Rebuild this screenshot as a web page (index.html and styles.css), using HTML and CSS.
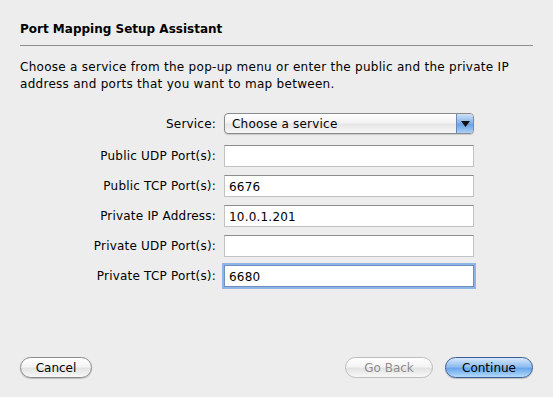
FILE: index.html
```html
<!DOCTYPE html>
<html lang="en">
  <head>
    <meta charset="UTF-8" />
    <meta name="viewport" content="width=device-width, initial-scale=1.0" />
    <title>Port Mapping Setup Assistant</title>
    <link rel="stylesheet" href="styles.css">
  </head>
  <body>
    <div class="assistant">
      <div class="assistant-title">Port Mapping Setup Assistant</div>

      <p class="assistant-intro">
        Choose a service from the pop-up menu or enter the public and the private IP
        address and ports that you want to map between.
      </p>

      <div class="mapping-form">
        <label class="field-label service-label">Service:</label>
        <div class="popup">
          <span class="popup-text">Choose a service</span>
          <span class="popup-arrow">
            <svg width="9" height="6" viewBox="0 0 9 6"><path d="M0 0 H9 L4.5 6 Z" fill="#111"/></svg>
          </span>
        </div>

        <label class="field-label">Public UDP Port(s):</label>
        <input class="text-field" type="text" value="">

        <label class="field-label">Public TCP Port(s):</label>
        <input class="text-field" type="text" value="6676">

        <label class="field-label">Private IP Address:</label>
        <input class="text-field" type="text" value="10.0.1.201">

        <label class="field-label">Private UDP Port(s):</label>
        <input class="text-field" type="text" value="">

        <label class="field-label">Private TCP Port(s):</label>
        <input class="text-field focused" type="text" value="6680">
      </div>

      <div class="button-bar">
        <button class="push-btn">Cancel</button>
        <div class="nav-buttons">
          <button class="push-btn disabled">Go Back</button>
          <button class="push-btn default">Continue</button>
        </div>
      </div>
    </div>
  </body>
</html>
```

FILE: styles.css
```css
html,
body {
  margin: 0;
  height: 100%;
}

body {
  background: #ededed;
  font-family: "DejaVu Sans", "Liberation Sans", sans-serif;
  font-size: 12px;
  color: #000;
}

.assistant {
  display: flex;
  flex-direction: column;
  height: 100%;
  box-sizing: border-box;
  padding: 21px 20px 19px 20px;
}

.assistant-title {
  font-weight: bold;
  line-height: 16px;
  padding-bottom: 8px;
  border-bottom: 1px solid #8e8e8e;
}

.assistant-intro {
  margin: 13px 0 0 0;
  line-height: 17px;
  letter-spacing: 0.28px;
}

.mapping-form {
  display: grid;
  grid-template-columns: 196px 250px;
  column-gap: 8px;
  row-gap: 8px;
  align-items: center;
  margin-top: 20px;
}

.field-label {
  text-align: right;
  line-height: 16px;
  letter-spacing: 0.2px;
}

.popup {
  display: flex;
  align-items: center;
  height: 21px;
  box-sizing: border-box;
  margin-bottom: 3px;
  border: 1px solid #8a8a8a;
  border-radius: 4px;
  background: linear-gradient(#ffffff, #f3f3f3 45%, #e6e6e6 55%, #f7f7f7);
  box-shadow: 0 1px 1px rgba(0, 0, 0, 0.15);
  overflow: hidden;
}

.popup-text {
  flex: 1;
  padding-left: 7px;
  letter-spacing: 0.2px;
}

.popup-arrow {
  display: flex;
  align-items: center;
  justify-content: center;
  width: 16px;
  height: 100%;
  background: linear-gradient(#cfe2f7, #86b5ea 45%, #6aa2e4 55%, #a9d0f7);
  border-left: 1px solid #6d88b4;
}

.service-label {
  margin-bottom: 3px;
}

.text-field {
  height: 22px;
  box-sizing: border-box;
  margin: 0;
  padding: 1px 4px 0 4px;
  border: 1px solid #c2c2c2;
  border-top-color: #8c8c8c;
  background: #fff;
  font-family: inherit;
  font-size: 12px;
  letter-spacing: 0.2px;
  color: #000;
  outline: none;
}

.text-field.focused {
  border-color: #6f8fba;
  box-shadow: 0 0 0 2px #8fb5e6;
}

.button-bar {
  display: flex;
  justify-content: space-between;
  margin-top: auto;
}

.nav-buttons {
  display: flex;
  gap: 12px;
}

.push-btn {
  height: 21px;
  min-width: 72px;
  padding: 0 14px;
  border: 1px solid #8a8a8a;
  border-radius: 11px;
  background: linear-gradient(#ffffff, #f4f4f4 45%, #e3e3e3 55%, #f8f8f8);
  box-shadow: 0 1px 1px rgba(0, 0, 0, 0.2);
  font-family: inherit;
  font-size: 12px;
  color: #000;
}

.push-btn.disabled {
  width: 88px;
  color: #8d8d8d;
  border-color: #bdbdbd;
  box-shadow: none;
}

.push-btn.default {
  width: 88px;
  border-color: #3d5d96;
  background: linear-gradient(#d7e8fb, #90bff0 45%, #6aa7ea 55%, #b3dafb);
}
```
